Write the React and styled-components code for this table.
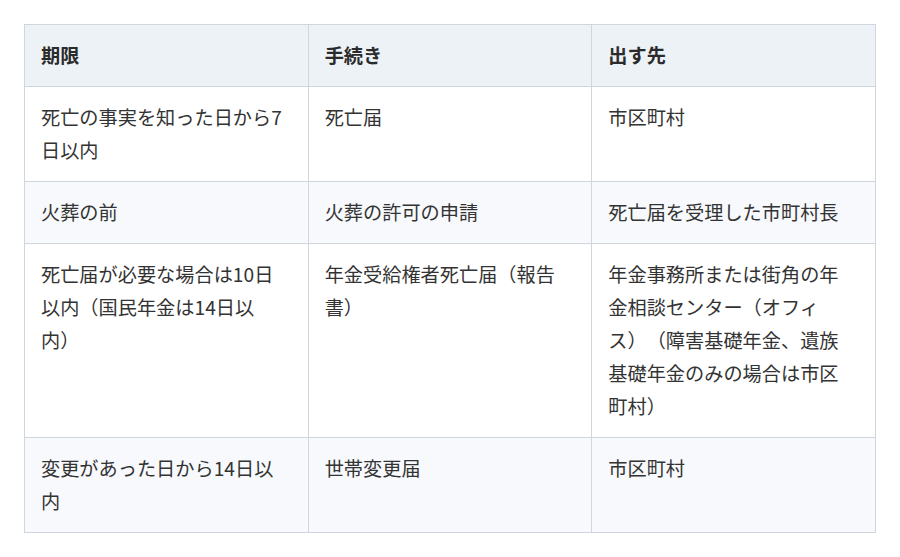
import React from "react";
import styled, { createGlobalStyle } from "styled-components";

const GlobalStyle = createGlobalStyle`
    html, body {
        margin: 0;
        padding: 0;
        background: #ffffff;
    }
    body {
        font-family: "Noto Sans CJK JP", "Noto Sans", sans-serif;
        color: #333333;
    }
`;

const rows = [
    ["死亡の事実を知った日から7日以内", "死亡届", "市区町村"],
    ["火葬の前", "火葬の許可の申請", "死亡届を受理した市町村長"],
    [
        "死亡届が必要な場合は10日以内（国民年金は14日以内）",
        "年金受給権者死亡届（報告書）",
        "年金事務所または街角の年金相談センター（オフィス）（障害基礎年金、遺族基礎年金のみの場合は市区町村）",
    ],
    ["変更があった日から14日以内", "世帯変更届", "市区町村"],
];

const App = () => {
    return (
        <Page>
            <GlobalStyle />
            <Table>
                <colgroup>
                    <col />
                    <col />
                    <col />
                </colgroup>
                <thead>
                    <tr>
                        <HeadCell>期限</HeadCell>
                        <HeadCell>手続き</HeadCell>
                        <HeadCell>出す先</HeadCell>
                    </tr>
                </thead>
                <tbody>
                    {rows.map((row, i) => (
                        <Row key={i} $striped={i % 2 === 1}>
                            {row.map((text, j) => (
                                <Cell key={j}>{text}</Cell>
                            ))}
                        </Row>
                    ))}
                </tbody>
            </Table>
        </Page>
    );
};

const Page = styled.div`
    padding: 24px;
`;

const Table = styled.table`
    width: 100%;
    table-layout: fixed;
    border-collapse: collapse;
    border: 1px solid #cfd6de;
    font-size: 19.2px;
    line-height: 33px;
    text-spacing-trim: space-all;
    col {
        width: 33.333%;
    }
`;

const HeadCell = styled.th`
    background: #edf2f7;
    border: 1px solid #cfd6de;
    padding: 14px 24px 14px 16px;
    text-align: left;
    font-weight: 700;
    color: #2b2b2b;
`;

const Row = styled.tr`
    background: ${(p) => (p.$striped ? "#f7f9fc" : "#ffffff")};
`;

const Cell = styled.td`
    border: 1px solid #cfd6de;
    padding: 14px 24px 14px 16px;
    vertical-align: top;
    text-align: left;
    line-break: strict;
`;

export default App;
